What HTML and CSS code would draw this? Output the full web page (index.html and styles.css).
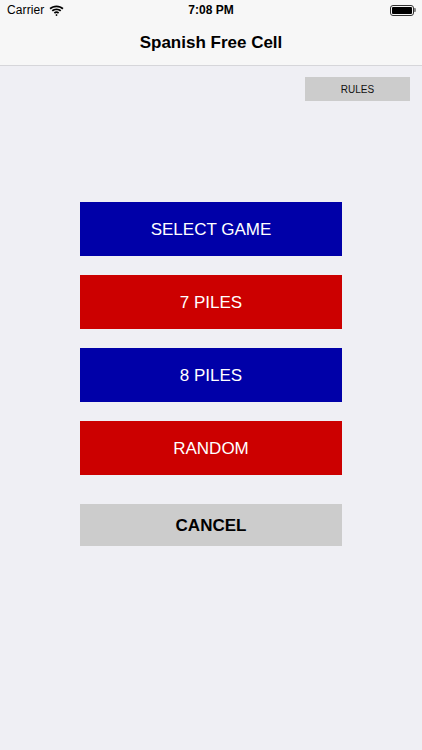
FILE: index.html
```html
<!DOCTYPE html>
<html>
<head>
<meta charset="utf-8">
<link rel="stylesheet" href="styles.css">
</head>
<body>
<div class="top">
  <div class="status">
    <div class="status-left">
      <span class="carrier">Carrier</span>
      <svg class="wifi" width="15" height="11" viewBox="0 0 15 11">
        <path d="M7.5 2.2c2.2 0 4.2.8 5.8 2.2l1.2-1.3C12.6 1.3 10.2.4 7.5.4S2.4 1.3.5 3.1l1.2 1.3C3.3 3 5.3 2.2 7.5 2.2z" fill="#000"/>
        <path d="M7.5 5.2c1.4 0 2.6.5 3.6 1.4l1.2-1.3C11 4.1 9.3 3.4 7.5 3.4S4 4.1 2.7 5.3l1.2 1.3c1-.9 2.2-1.4 3.6-1.4z" fill="#000"/>
        <path d="M7.5 8.1c.6 0 1.1.2 1.5.6l1.2-1.3c-.7-.7-1.7-1.1-2.7-1.1s-2 .4-2.7 1.1L6 8.7c.4-.4.9-.6 1.5-.6z" fill="#000"/>
        <path d="M7.5 8.9l1.1 1.2-1.1 1.1-1.1-1.1z" fill="#000"/>
      </svg>
    </div>
    <div class="time">7:08 PM</div>
    <div class="status-right">
      <div class="battery"><div class="battery-fill"></div></div>
      <div class="battery-cap"></div>
    </div>
  </div>
  <div class="navbar">Spanish Free Cell</div>
</div>
<div class="content">
  <div class="rules-row"><button class="rules">RULES</button></div>
  <div class="menu">
    <button class="btn blue">SELECT GAME</button>
    <button class="btn red">7 PILES</button>
    <button class="btn blue">8 PILES</button>
    <button class="btn red">RANDOM</button>
    <button class="btn cancel">CANCEL</button>
  </div>
</div>
</body>
</html>
```
FILE: styles.css
```css
* { box-sizing: border-box; }
html, body { margin: 0; padding: 0; }
body {
  width: 422px;
  height: 750px;
  background: #efeff4;
  font-family: "Liberation Sans", Arial, sans-serif;
  overflow: hidden;
}
.top {
  background: #f7f7f7;
  border-bottom: 1px solid #d6d6da;
  height: 66px;
}
.status {
  height: 20px;
  display: flex;
  align-items: center;
  justify-content: space-between;
  padding: 0 6px 0 7px;
  position: relative;
}
.status-left {
  display: flex;
  align-items: center;
  gap: 5px;
  font-size: 12px;
  color: #000;
}
.carrier { letter-spacing: 0.1px; }
.time {
  position: absolute;
  left: 0; right: 0;
  text-align: center;
  font-size: 12px;
  font-weight: bold;
  color: #000;
}
.status-right {
  display: flex;
  align-items: center;
}
.battery {
  width: 24px;
  height: 11px;
  border: 1px solid #333;
  border-radius: 3px;
  padding: 1px;
}
.battery-fill {
  width: 100%;
  height: 100%;
  background: #000;
  border-radius: 1px;
}
.battery-cap {
  width: 2px;
  height: 4px;
  background: #888;
  border-radius: 0 1px 1px 0;
}
.navbar {
  height: 45px;
  display: flex;
  align-items: center;
  justify-content: center;
  font-size: 17px;
  font-weight: bold;
  color: #000;
}
.content {
  display: flex;
  flex-direction: column;
}
.rules-row {
  display: flex;
  justify-content: flex-end;
  padding: 11px 12px 0 0;
}
.rules {
  width: 105px;
  height: 24px;
  background: #cccccc;
  border: none;
  font-family: "Liberation Sans", Arial, sans-serif;
  font-size: 10px;
  color: #111;
  padding: 0;
}
.menu {
  display: flex;
  flex-direction: column;
  align-items: center;
  gap: 19px;
  margin-top: 101px;
}
.btn {
  width: 262px;
  height: 54px;
  border: none;
  padding: 2px 0 0 0;
  font-family: "Liberation Sans", Arial, sans-serif;
  font-size: 17px;
  color: #fff;
}
.blue { background: #0000a8; }
.red { background: #cc0000; }
.cancel {
  margin-top: 10px;
  height: 42px;
  background: #cccccc;
  color: #000;
  font-weight: bold;
  font-size: 17px;
}
```
